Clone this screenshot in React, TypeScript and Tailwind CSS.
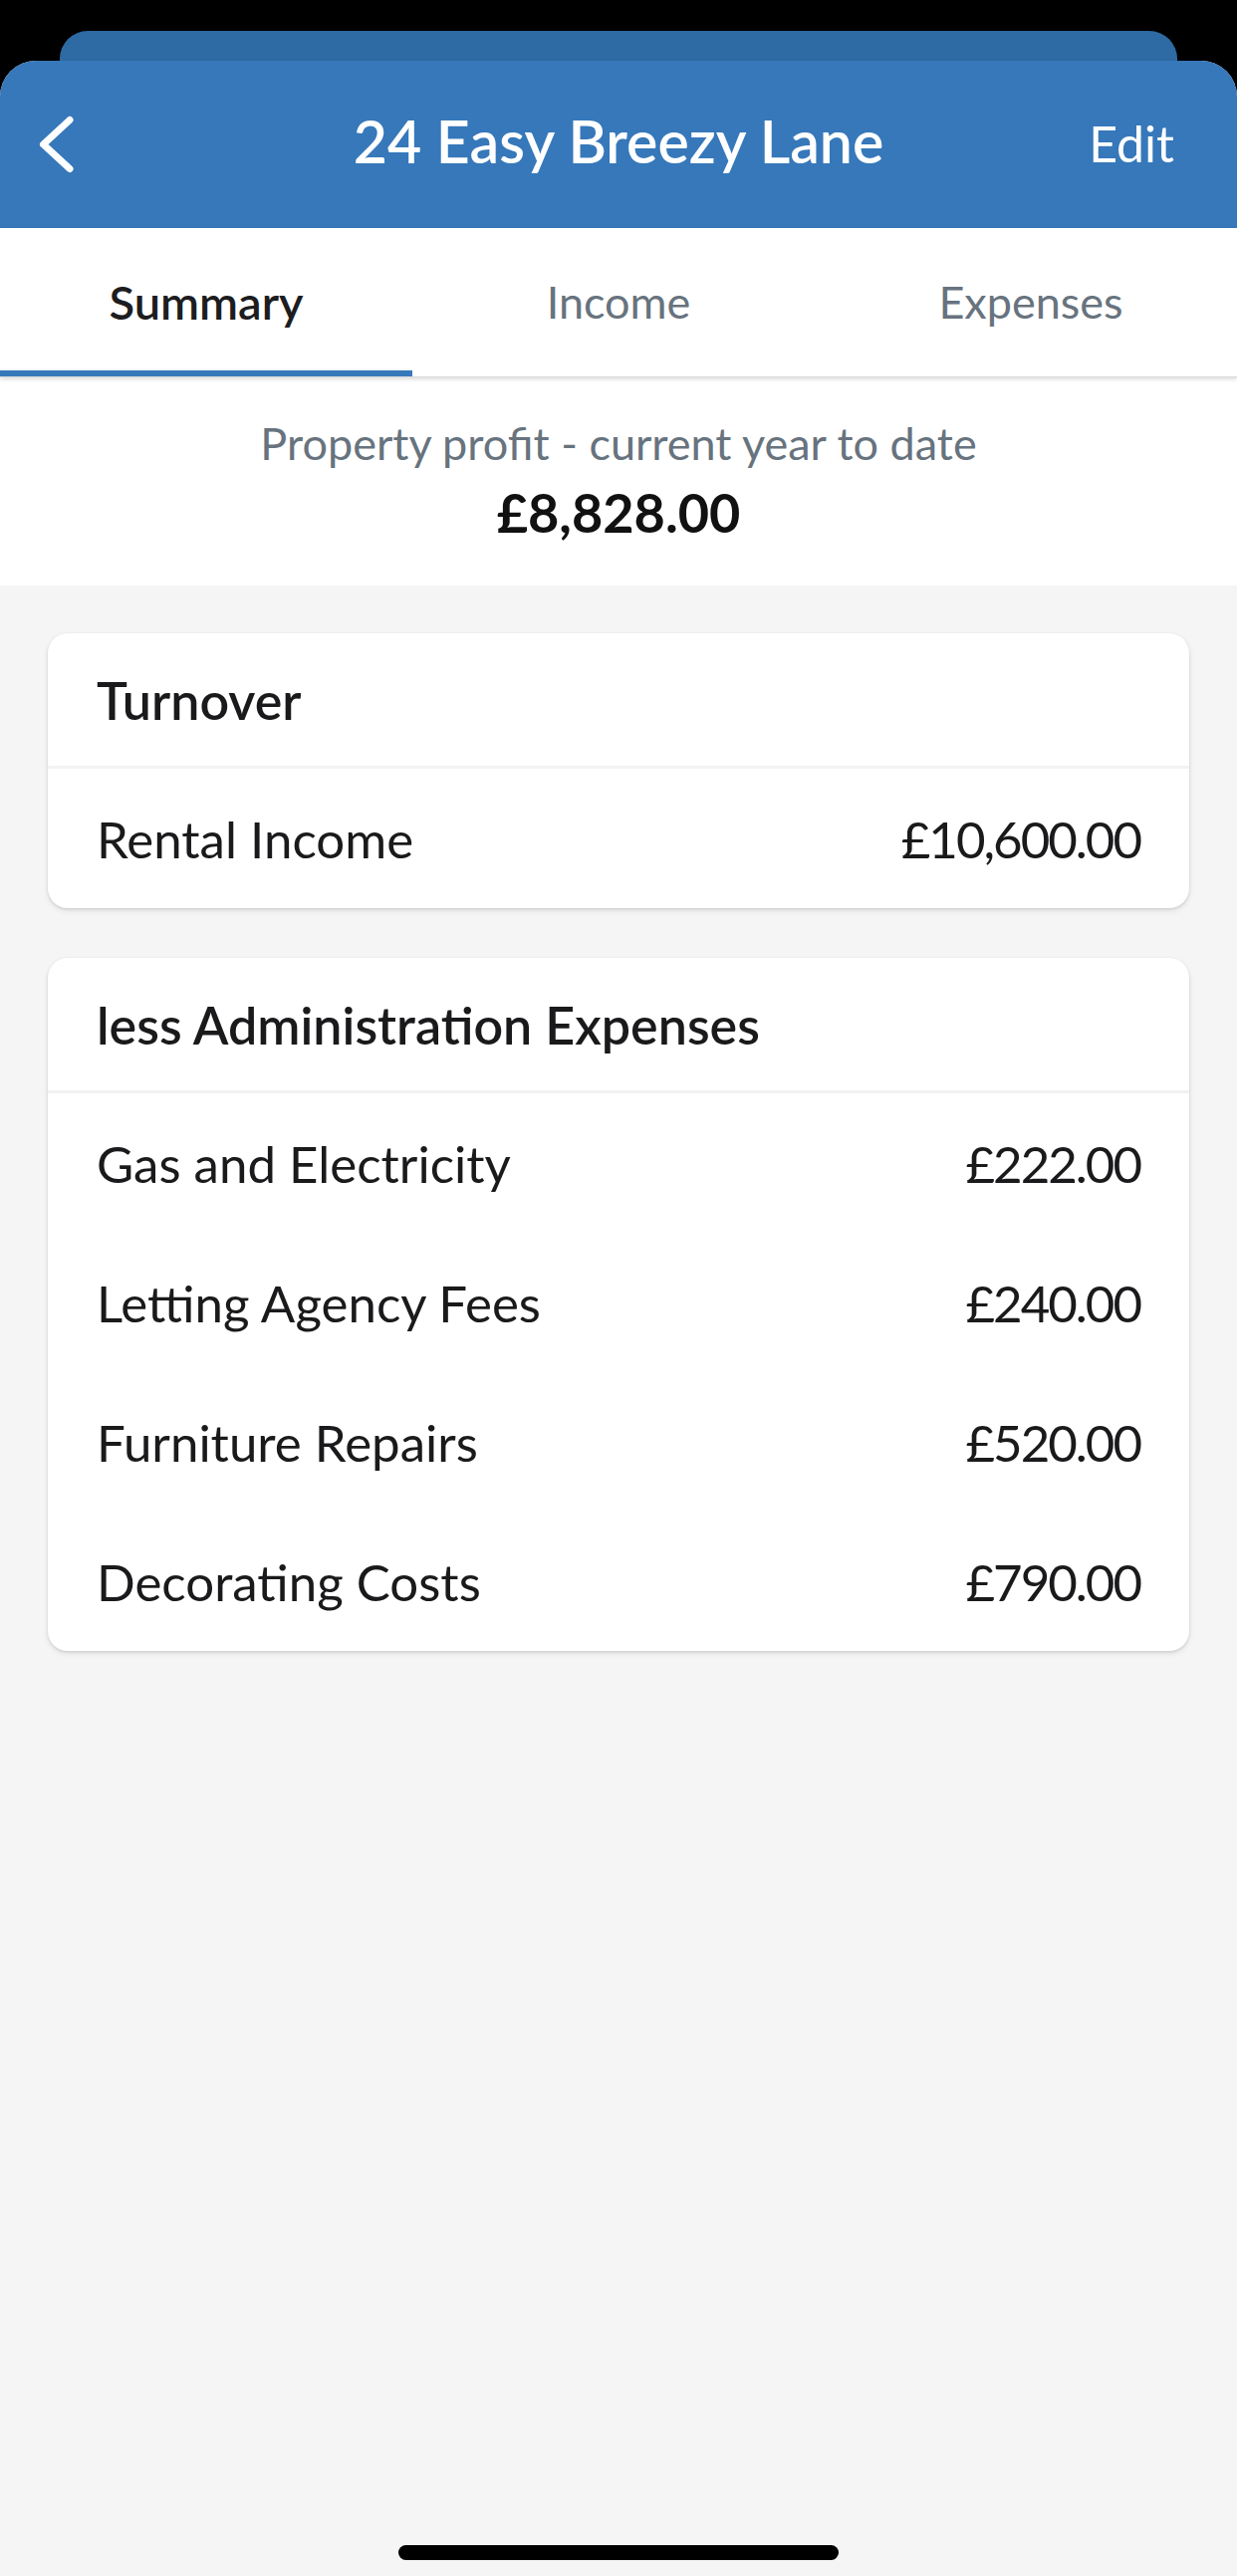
import { useState } from 'react'

type Line = { label: string; amount: string }
type Section = { title: string; lines: Line[] }

const sections: Section[] = [
  { title: 'Turnover', lines: [{ label: 'Rental Income', amount: '£10,600.00' }] },
  {
    title: 'less Administration Expenses',
    lines: [
      { label: 'Gas and Electricity', amount: '£222.00' },
      { label: 'Letting Agency Fees', amount: '£240.00' },
      { label: 'Furniture Repairs', amount: '£520.00' },
      { label: 'Decorating Costs', amount: '£790.00' },
    ],
  },
]

const tabs = ['Summary', 'Income', 'Expenses']

function BackChevron() {
  return (
    <svg width="40" height="60" viewBox="0 0 40 60" fill="none">
      <polyline
        points="34,5.5 7.5,30 34,54.5"
        stroke="white"
        strokeWidth="7"
        strokeLinecap="round"
        strokeLinejoin="round"
      />
    </svg>
  )
}

function SectionCard({ section }: { section: Section }) {
  return (
    <div className="bg-white rounded-[20px] shadow-[0_1px_3px_rgba(0,0,0,0.12),0_3px_6px_rgba(0,0,0,0.08)] overflow-hidden">
      <div className="h-[136px] flex items-center px-[49px] border-b-[3px] border-[#f2f2f3]">
        <span className="text-[52px] leading-none font-semibold text-[#1a1a1c]">{section.title}</span>
      </div>
      {section.lines.map(l => (
        <div key={l.label} className="h-[140px] flex items-center justify-between px-[49px] text-[51px] leading-none text-[#1a1a1c]">
          <span>{l.label}</span>
          <span className="tracking-[-2px]">{l.amount}</span>
        </div>
      ))}
    </div>
  )
}

export default function App() {
  const [active, setActive] = useState(0)

  return (
    <div className="w-[1242px] h-[2587px] bg-black flex flex-col overflow-hidden [font-family:Lato,'Noto_Sans',sans-serif]">
      <div className="h-[61px] pt-[31px] px-[60px] shrink-0">
        <div className="h-full bg-[#2e6aa3] rounded-t-[28px]" />
      </div>

      <div className="flex-1 flex flex-col bg-[#f5f5f5] rounded-t-[36px] overflow-hidden">
        <header className="h-[168px] shrink-0 bg-[#3678ba] grid grid-cols-[1fr_auto_1fr] items-center text-white">
          <button className="pl-[36px] flex items-center justify-start">
            <BackChevron />
          </button>
          <h1 className="text-[59px] leading-none font-semibold mb-[8px]">24 Easy Breezy Lane</h1>
          <div className="flex justify-end pr-[63px]">
            <button className="text-[50px] leading-none mb-[3px]">Edit</button>
          </div>
        </header>

        <nav className="h-[150px] shrink-0 bg-white grid grid-cols-3 relative z-10 border-b border-[#d9d9d9] shadow-[0_2px_4px_rgba(0,0,0,0.14)]">
          {tabs.map((t, i) => (
            <button key={t} onClick={() => setActive(i)} className="flex flex-col h-full">
              <span
                className={`flex-1 flex items-center justify-center pt-[6px] leading-none ${
                  i === active ? 'text-[47px] font-semibold text-[#1d1d1f]' : 'text-[45px] text-[#67737e]'
                }`}
              >
                {t}
              </span>
              <span className={`h-[6px] w-full ${i === active ? 'bg-[#3678ba]' : 'bg-transparent'}`} />
            </button>
          ))}
        </nav>

        <section className="shrink-0 bg-white flex flex-col items-center pt-[44px] pb-[46px] gap-[20px]">
          <p className="text-[45px] leading-none text-[#67737e]">Property profit - current year to date</p>
          <p className="text-[54px] leading-none font-bold text-[#111]">£8,828.00</p>
        </section>

        <main className="flex flex-col gap-[50px] px-[48px] pt-[48px]">
          {sections.map(s => (
            <SectionCard key={s.title} section={s} />
          ))}
        </main>

        <div className="mt-auto mb-[16px] self-center w-[442px] h-[15px] rounded-full bg-black" />
      </div>
    </div>
  )
}
